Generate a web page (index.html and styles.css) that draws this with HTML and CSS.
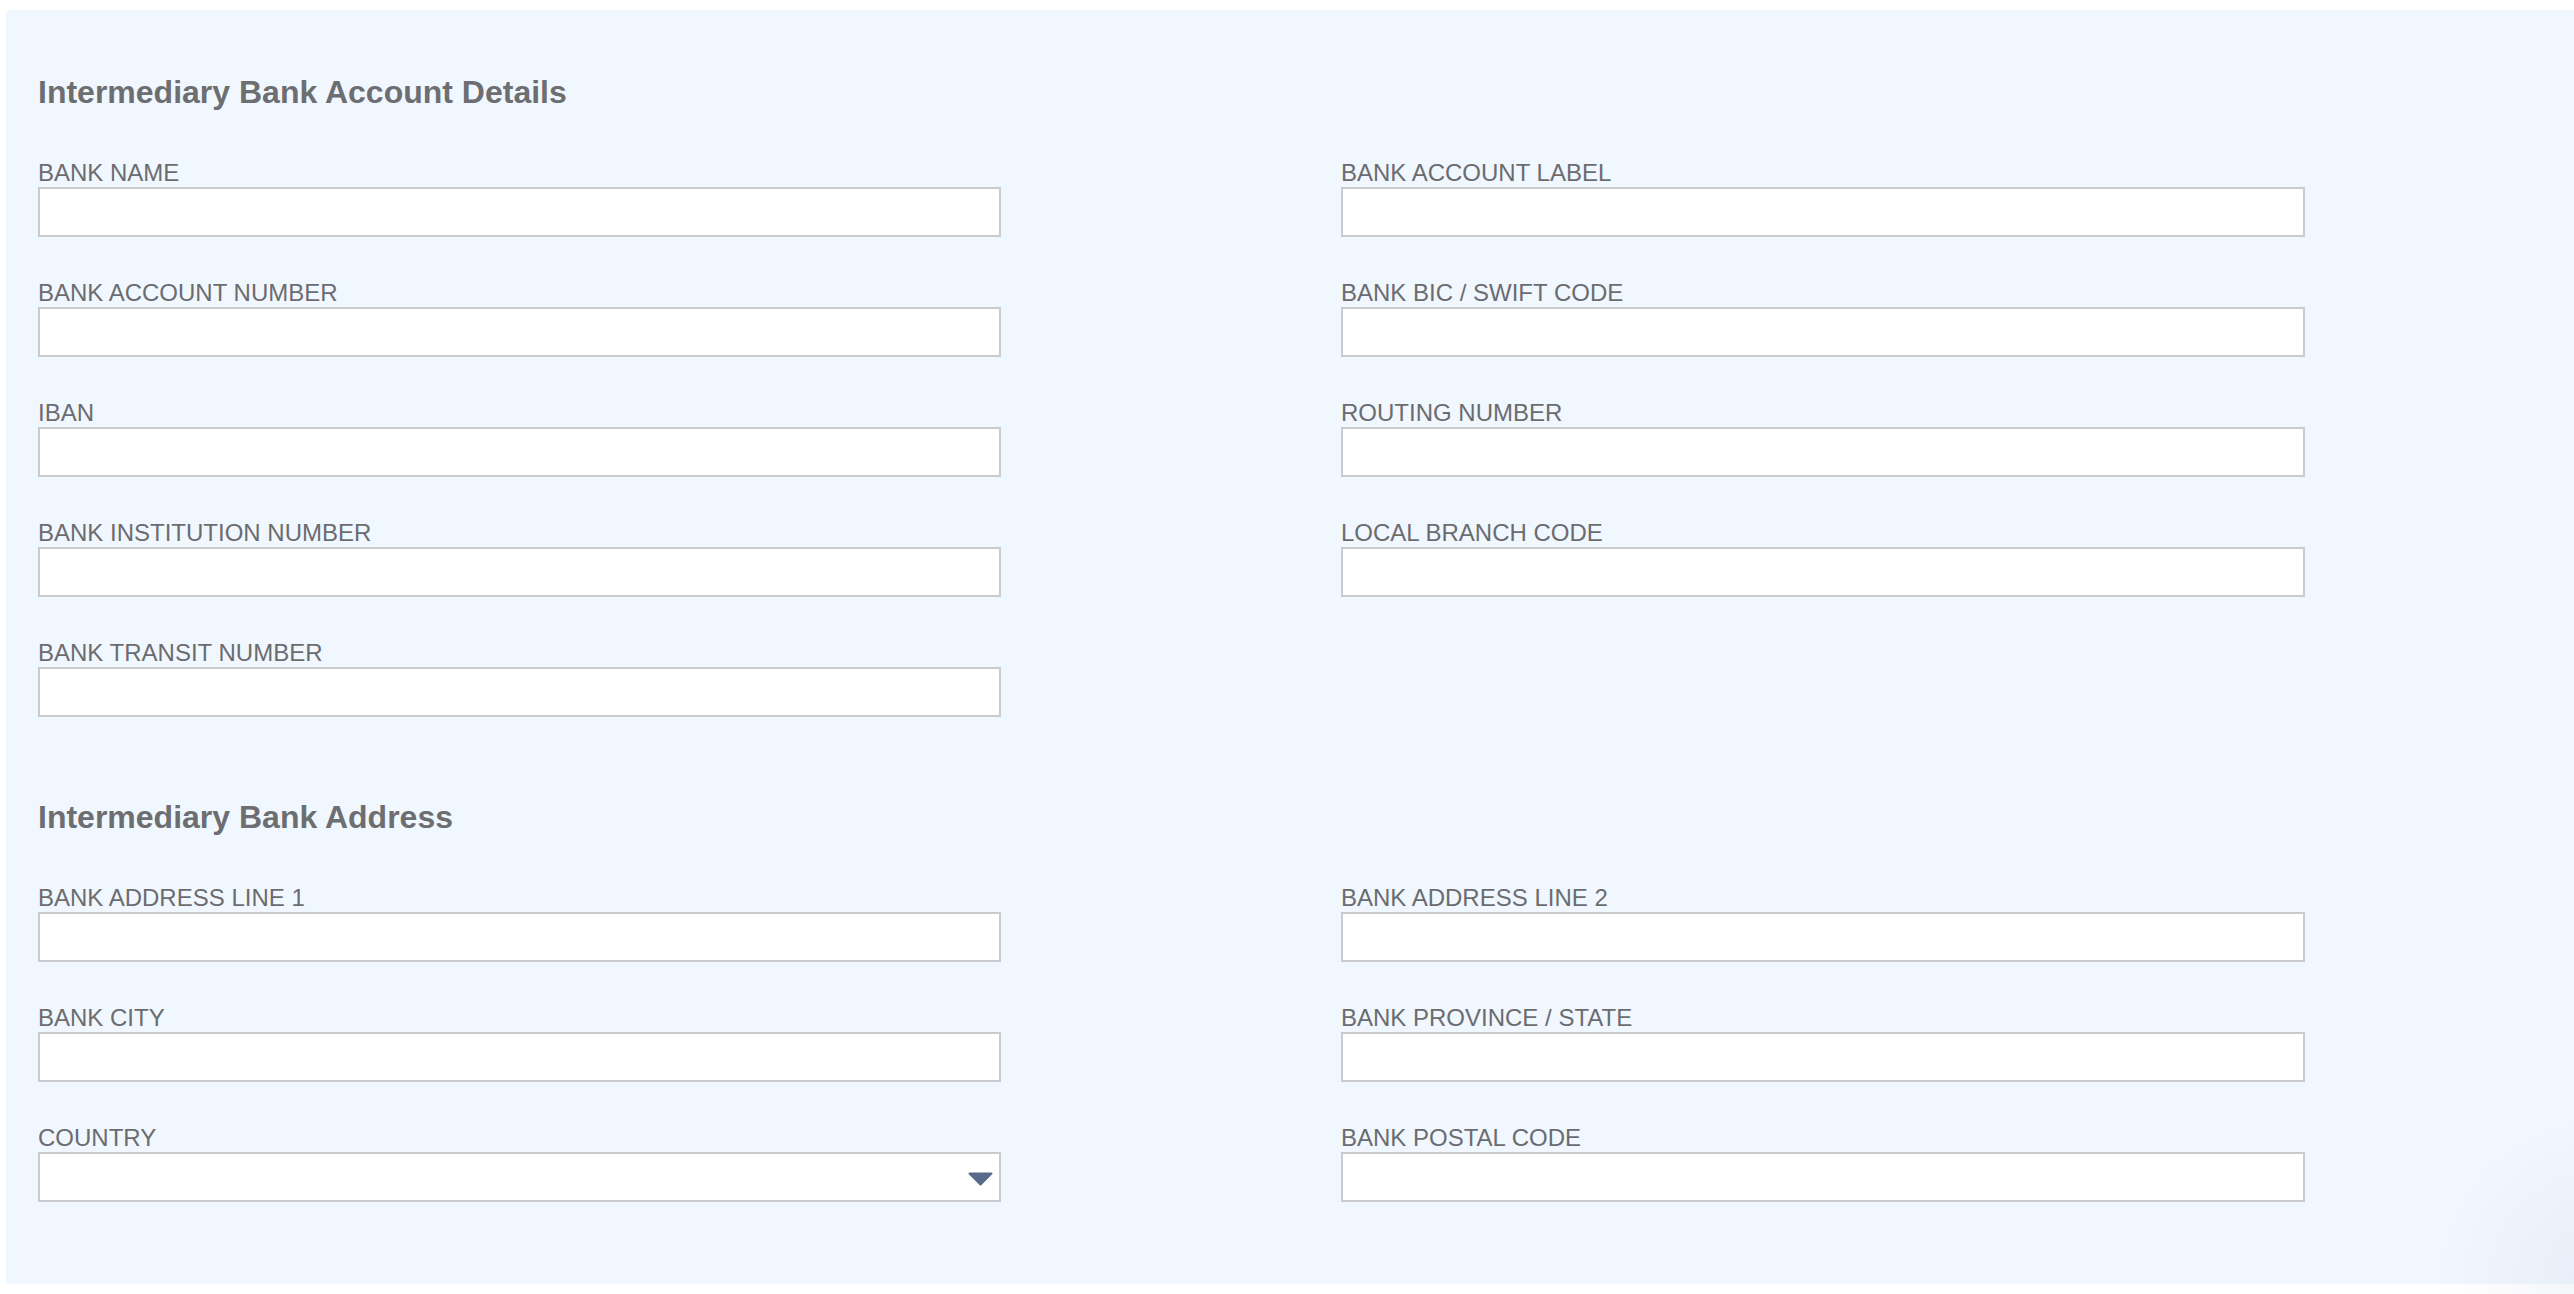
FILE: index.html
```html
<!DOCTYPE html>
<html lang="en">
<head>
<meta charset="utf-8">
<title>Intermediary Bank</title>
<link rel="stylesheet" href="styles.css">
</head>
<body>
<div class="panel">
  <section class="section">
    <h2 class="section-title">Intermediary Bank Account Details</h2>
    <div class="grid">
      <div class="field"><label class="label">BANK NAME</label><input class="input" type="text"></div>
      <div class="field"><label class="label">BANK ACCOUNT LABEL</label><input class="input" type="text"></div>
      <div class="field"><label class="label">BANK ACCOUNT NUMBER</label><input class="input" type="text"></div>
      <div class="field"><label class="label">BANK BIC / SWIFT CODE</label><input class="input" type="text"></div>
      <div class="field"><label class="label">IBAN</label><input class="input" type="text"></div>
      <div class="field"><label class="label">ROUTING NUMBER</label><input class="input" type="text"></div>
      <div class="field"><label class="label">BANK INSTITUTION NUMBER</label><input class="input" type="text"></div>
      <div class="field"><label class="label">LOCAL BRANCH CODE</label><input class="input" type="text"></div>
      <div class="field"><label class="label">BANK TRANSIT NUMBER</label><input class="input" type="text"></div>
    </div>
  </section>
  <section class="section">
    <h2 class="section-title">Intermediary Bank Address</h2>
    <div class="grid">
      <div class="field"><label class="label">BANK ADDRESS LINE 1</label><input class="input" type="text"></div>
      <div class="field"><label class="label">BANK ADDRESS LINE 2</label><input class="input" type="text"></div>
      <div class="field"><label class="label">BANK CITY</label><input class="input" type="text"></div>
      <div class="field"><label class="label">BANK PROVINCE / STATE</label><input class="input" type="text"></div>
      <div class="field">
        <label class="label">COUNTRY</label>
        <div class="select-wrap">
          <select class="input select"><option></option></select>
          <svg class="caret" width="25" height="14" viewBox="0 0 25 14"><polygon points="1.5,1.5 23.5,1.5 12.5,12.5" fill="#586b8a" stroke="#586b8a" stroke-width="2" stroke-linejoin="round"/></svg>
        </div>
      </div>
      <div class="field"><label class="label">BANK POSTAL CODE</label><input class="input" type="text"></div>
    </div>
  </section>
  <div class="corner-shadow"></div>
</div>
</body>
</html>
```

FILE: styles.css
```css
html, body {
  margin: 0;
  padding: 0;
  background: #ffffff;
  overflow: hidden;
}
body {
  font-family: "Liberation Sans", Arial, Helvetica, sans-serif;
  width: 2574px;
  height: 1294px;
}
.panel {
  position: relative;
  margin: 10px 0 0 6px;
  height: 1274px;
  box-sizing: border-box;
  background: #f1f7fe;
  border-top-left-radius: 4px;
  padding: 64px 32px 0 32px;
}
.section + .section {
  margin-top: 82px;
}
.section-title {
  margin: 0 0 49px 0;
  font-size: 32px;
  line-height: 36px;
  font-weight: bold;
  color: #6d6e71;
}
.grid {
  display: grid;
  grid-template-columns: 963px 964px;
  column-gap: 340px;
  row-gap: 42px;
}
.field {
  display: flex;
  flex-direction: column;
}
.label {
  font-size: 24px;
  line-height: 28px;
  color: #6b6c70;
}
.input {
  display: block;
  box-sizing: border-box;
  width: 100%;
  height: 50px;
  margin: 0;
  border: 2px solid #c9cbcf;
  border-radius: 0;
  background: #ffffff;
  outline: none;
  font: inherit;
}
.select-wrap {
  position: relative;
}
.select {
  appearance: none;
  -webkit-appearance: none;
}
.caret {
  position: absolute;
  right: 8px;
  top: 20px;
  pointer-events: none;
}
.corner-shadow {
  position: absolute;
  right: -30px;
  bottom: -30px;
  width: 170px;
  height: 200px;
  background: radial-gradient(ellipse at 100% 85%, rgba(90, 110, 150, 0.07) 0%, rgba(90, 110, 150, 0.03) 40%, rgba(90, 110, 150, 0) 70%);
  pointer-events: none;
}
```
